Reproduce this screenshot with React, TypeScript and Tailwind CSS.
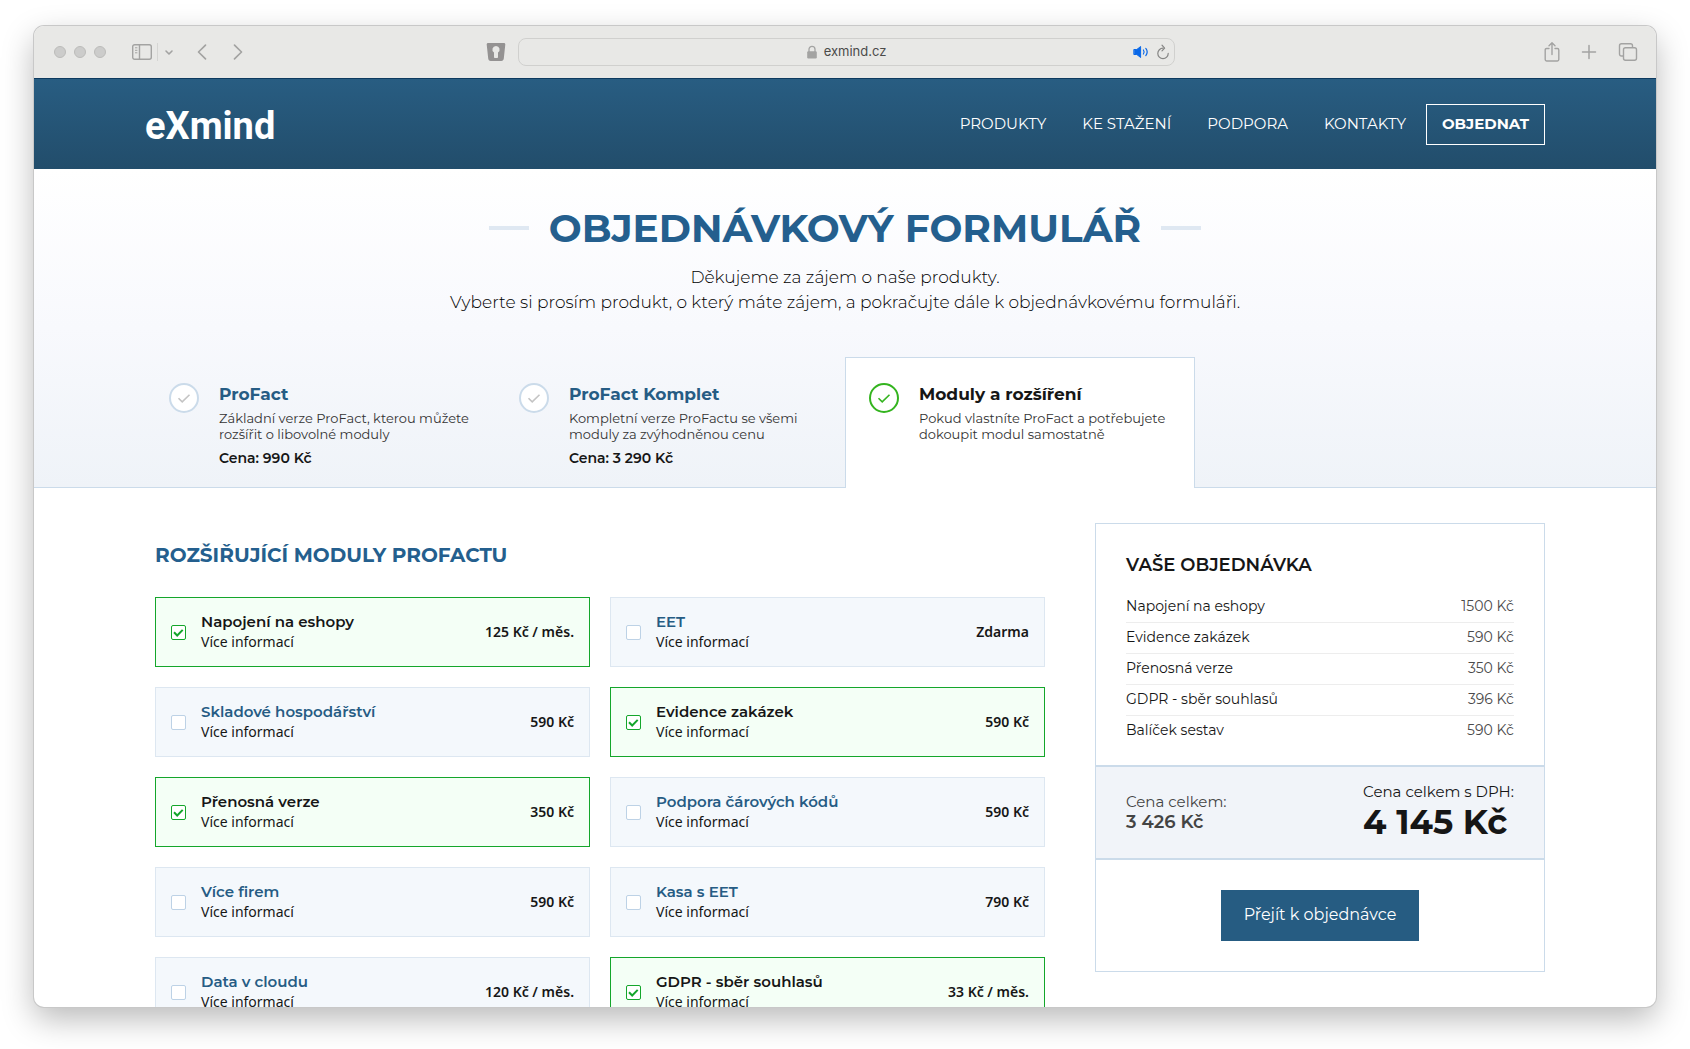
import { useState } from 'react'

const navLinks = ['Produkty', 'Ke stažení', 'Podpora', 'Kontakty']

const products = [
  {
    id: 'profact',
    name: 'ProFact',
    lines: ['Základní verze ProFact, kterou můžete', 'rozšířit o libovolné moduly'],
    price: 'Cena: 990 Kč',
  },
  {
    id: 'komplet',
    name: 'ProFact Komplet',
    lines: ['Kompletní verze ProFactu se všemi', 'moduly za zvýhodněnou cenu'],
    price: 'Cena: 3 290 Kč',
  },
  {
    id: 'moduly',
    name: 'Moduly a rozšíření',
    lines: ['Pokud vlastníte ProFact a potřebujete', 'dokoupit modul samostatně'],
  },
]

const modules = [
  { id: 'eshopy', name: 'Napojení na eshopy', price: '125 Kč / měs.', checked: true },
  { id: 'eet', name: 'EET', price: 'Zdarma' },
  { id: 'sklad', name: 'Skladové hospodářství', price: '590 Kč' },
  { id: 'zakazky', name: 'Evidence zakázek', price: '590 Kč', checked: true },
  { id: 'prenosna', name: 'Přenosná verze', price: '350 Kč', checked: true },
  { id: 'kody', name: 'Podpora čárových kódů', price: '590 Kč' },
  { id: 'firmy', name: 'Více firem', price: '590 Kč' },
  { id: 'kasa', name: 'Kasa s EET', price: '790 Kč' },
  { id: 'cloud', name: 'Data v cloudu', price: '120 Kč / měs.' },
  { id: 'gdpr', name: 'GDPR - sběr souhlasů', price: '33 Kč / měs.', checked: true },
]

const orderItems = [
  ['Napojení na eshopy', '1500 Kč'],
  ['Evidence zakázek', '590 Kč'],
  ['Přenosná verze', '350 Kč'],
  ['GDPR - sběr souhlasů', '396 Kč'],
  ['Balíček sestav', '590 Kč'],
]

function BrowserBar() {
  return (
    <div className="flex h-[53px] shrink-0 items-center border-b border-[#0d3a5f] bg-[#e8e8e6] text-[#a3a3a2]">
      <div className="flex flex-1 items-center pl-5">
        <div className="flex gap-2">
          <span className="size-3 rounded-full border border-[#bcbcba] bg-[#cccccb]" />
          <span className="size-3 rounded-full border border-[#bcbcba] bg-[#cccccb]" />
          <span className="size-3 rounded-full border border-[#bcbcba] bg-[#cccccb]" />
        </div>
        <button aria-label="Postranní panel" className="ml-[25px]">
          <svg width="22" height="18" viewBox="0 0 22 18" fill="none" stroke="currentColor" strokeWidth="1.4">
            <rect x="1.7" y="1.7" width="18.6" height="14.6" rx="2" />
            <path d="M8.5 1.7v14.6" />
            <path d="M4 4.8h2.4M4 7.3h2.4M4 9.8h2.4" strokeWidth="1" />
          </svg>
        </button>
        <span className="ml-1 h-[18px] w-px bg-[#d5d5d3]" />
        <button aria-label="Skupiny panelů" className="ml-1">
          <svg width="14" height="12" viewBox="0 0 14 12" fill="none" stroke="currentColor" strokeWidth="1.6" strokeLinecap="round" strokeLinejoin="round">
            <path d="M4 5l3 3 3-3" />
          </svg>
        </button>
        <button aria-label="Zpět" className="ml-[18px]">
          <svg width="16" height="18" viewBox="0 0 16 18" fill="none" stroke="currentColor" strokeWidth="1.7" strokeLinecap="round" strokeLinejoin="round">
            <path d="M11.5 2.2L4.5 9l7 6.8" />
          </svg>
        </button>
        <button aria-label="Vpřed" className="ml-5">
          <svg width="16" height="18" viewBox="0 0 16 18" fill="none" stroke="currentColor" strokeWidth="1.7" strokeLinecap="round" strokeLinejoin="round">
            <path d="M4.5 2.2l7 6.8-7 6.8" />
          </svg>
        </button>
        <button aria-label="Správce hesel" className="mr-3 ml-auto">
          <svg width="20" height="20" viewBox="0 0 20 20">
            <path d="M2.2 1h15.6c1 0 1.6.7 1.5 1.6l-1.5 14c-.2 1.5-1 2.4-2.5 2.4H4.7c-1.5 0-2.3-.9-2.5-2.4L.7 2.6C.6 1.7 1.2 1 2.2 1z" fill="#949292" />
            <path d="M10 4a3.600 3.600 0 0 0-2 6.600v4.600c0 .5.300.8.800.8h2.400c.5 0 .8-.3.800-.8v-4.600A3.600 3.600 0 0 0 10 4z" fill="#e8e8e6" />
          </svg>
        </button>
      </div>

      <div className="flex h-7 w-[42%] max-w-[657px] items-center rounded-lg border border-[#d0d0ce] px-1">
        <span className="flex-1" />
        <svg width="12" height="14" viewBox="0 0 12 14" className="mr-[6px]">
          <path d="M3 7V4.3a3 3 0 0 1 6 0V7" fill="none" stroke="currentColor" strokeWidth="1.3" />
          <rect x="1.2" y="6.3" width="9.600" height="7.2" rx="1.2" fill="currentColor" />
        </svg>
        <span className="font-[Inter,sans-serif] text-[13px] text-[#4b4b4a]">exmind.cz</span>
        <span className="flex flex-1 items-center justify-end gap-[6px]">
          <button aria-label="Ztlumit panel">
            <svg width="17" height="14" viewBox="0 0 17 14" fill="none" stroke="#0a68e8" strokeLinecap="round">
              <path d="M1.2 4.5h2.6L7.6 1.5v11L3.8 9.5H1.2z" fill="#0a68e8" strokeWidth="1" strokeLinejoin="round" />
              <path d="M10.4 5c.9 1.2.9 2.8 0 4M12.8 3.4c1.7 2.2 1.7 5 0 7.2" strokeWidth="1.2" />
            </svg>
          </button>
          <button aria-label="Načíst znovu">
            <svg width="14" height="16" viewBox="0 0 14 16" fill="none" stroke="#858584" strokeWidth="1.2" strokeLinecap="round" strokeLinejoin="round">
              <path d="M7 4.2a5.2 5.2 0 1 0 5.2 5.2" />
              <path d="M6 1.2l2.6 3L6 6.9" />
            </svg>
          </button>
        </span>
      </div>

      <div className="flex flex-1 items-center justify-end gap-5 pr-[18px]">
        <button aria-label="Sdílet">
          <svg width="16" height="22" viewBox="0 0 16 22" fill="none" stroke="currentColor" strokeWidth="1.4" strokeLinecap="round" strokeLinejoin="round">
            <path d="M5 7.5H2.6C1.7 7.5 1.2 8 1.2 8.9v9.7c0 .9.5 1.4 1.4 1.4h10.8c.9 0 1.4-.5 1.4-1.4V8.9c0-.9-.5-1.4-1.4-1.4H11" />
            <path d="M8 13.5V2M5 4.7L8 1.7l3 3" />
          </svg>
        </button>
        <button aria-label="Nový panel">
          <svg width="18" height="18" viewBox="0 0 18 18" fill="none" stroke="currentColor" strokeWidth="1.5" strokeLinecap="round">
            <path d="M9 2.5v13M2.5 9h13" />
          </svg>
        </button>
        <button aria-label="Přehled panelů">
          <svg width="20" height="20" viewBox="0 0 20 20" fill="none" stroke="currentColor" strokeWidth="1.4" strokeLinejoin="round">
            <rect x="5.5" y="5.7" width="13" height="12.6" rx="2" />
            <path d="M5.5 14H3.5c-1.2 0-2-.8-2-2V3.7c0-1.2.8-2 2-2h9c1.2 0 2 .8 2 2v2" />
          </svg>
        </button>
      </div>
    </div>
  )
}

function Header() {
  return (
    <header className="h-[90px] shrink-0 bg-linear-to-b from-[#285d82] to-[#224d6b]">
      <div className="mx-auto flex h-full max-w-[1400px] items-center justify-between">
        <a href="#" className="pt-1 font-[Roboto,sans-serif] text-[38px] leading-none font-bold text-white">
          eXmind
        </a>
        <nav className="flex items-center gap-9 text-[15px] text-white uppercase">
          {navLinks.map((link) => (
            <a key={link} href="#">
              {link}
            </a>
          ))}
          <a href="#" className="-ml-4 flex h-[41px] items-center border border-white px-[15px] font-bold">
            Objednat
          </a>
        </nav>
      </div>
    </header>
  )
}

function ProductTabs() {
  const [active, setActive] = useState('moduly')

  return (
    <div role="tablist" className="mx-auto -mb-px flex w-full max-w-[1400px]">
      {products.map((product) => {
        const selected = product.id === active
        return (
          <button
            key={product.id}
            role="tab"
            aria-selected={selected}
            onClick={() => setActive(product.id)}
            className={`flex h-[131px] w-[350px] items-start gap-5 border border-b-0 pt-[25px] pl-[23px] text-left ${
              selected ? 'border-[#cbdbea] bg-white' : 'border-transparent'
            }`}
          >
            <svg width="30" height="30" viewBox="0 0 30 30" className="shrink-0">
              <circle cx="15" cy="15" r="14" fill="#fff" stroke={selected ? '#34b41f' : '#cbdbea'} strokeWidth="2" />
              <path d="M9.5 15.3l3.7 3.6 7.3-7.2" fill="none" stroke={selected ? '#34b41f' : '#c4c4c4'} strokeWidth="1.6" />
            </svg>
            <span className="flex flex-col">
              <span className={`text-[17px] leading-[22px] font-bold ${selected ? 'text-[#161616]' : 'text-[#265c84]'}`}>{product.name}</span>
              <span className="mt-[5px] text-[13px] leading-4 whitespace-nowrap text-[#333]">
                {product.lines[0]}
                <br />
                {product.lines[1]}
              </span>
              {product.price && <span className="mt-[6px] text-sm leading-5 font-semibold text-[#161616]">{product.price}</span>}
            </span>
          </button>
        )
      })}
    </div>
  )
}

function ModuleCard({ id, name, price, checked = false }: { id: string; name: string; price: string; checked?: boolean }) {
  return (
    <div className="group flex h-[70px] items-center border border-[#dde7f1] bg-[#f4f8fc] px-[15px] has-checked:border-[#14a62b] has-checked:bg-[#f4fff6]">
      <span className="relative flex size-[15px] shrink-0">
        <input
          id={id}
          type="checkbox"
          defaultChecked={checked}
          className="size-[15px] appearance-none rounded-[2px] border border-[#bdd2e6] bg-white checked:border-[#14a62b]"
        />
        <svg viewBox="0 0 15 15" className="pointer-events-none absolute inset-0 hidden group-has-checked:block">
          <path d="M3 7.300l3.200 3.200 5.500-5.600" fill="none" stroke="#14a62b" strokeWidth="2" />
        </svg>
      </span>
      <div className="ml-[15px] flex flex-col">
        <label htmlFor={id} className="text-[15px] leading-5 font-semibold text-[#265c84] group-has-checked:text-[#161616]">
          {name}
        </label>
        <a href="#" className="font-['Noto_Sans',sans-serif] text-sm leading-5 text-[#161616]">
          Více informací
        </a>
      </div>
      <span className="ml-auto font-['Noto_Sans',sans-serif] text-sm font-semibold text-[#161616]">{price}</span>
    </div>
  )
}

function OrderSummary() {
  return (
    <aside className="w-[450px] shrink-0 self-start border border-[#cbdbea] bg-white">
      <div className="px-[30px] pt-[27px] pb-[19px]">
        <h2 className="text-lg leading-7 font-semibold text-[#161616] uppercase">Vaše objednávka</h2>
        <table className="mt-3 w-full text-sm">
          <tbody>
            {orderItems.map(([name, price]) => (
              <tr key={name} className="h-[31px] border-b border-[#ededed] last:border-b-0">
                <td className="pb-px text-[#161616]">{name}</td>
                <td className="pb-px text-right text-[#4a4a4a]">{price}</td>
              </tr>
            ))}
          </tbody>
        </table>
      </div>
      <div className="flex h-[95px] items-center justify-between border-y-2 border-[#cbdbea] bg-[#f1f4f9] px-[30px] pb-[2px]">
        <p className="text-[15px] leading-5 text-[#444]">
          Cena celkem:
          <strong className="block text-lg leading-5 font-semibold">3 426 Kč</strong>
        </p>
        <p className="text-[15px] leading-5 text-[#161616]">
          Cena celkem s DPH:
          <strong className="block text-[34px] leading-10 font-bold">4 145 Kč</strong>
        </p>
      </div>
      <div className="flex justify-center py-[30px]">
        <button className="h-[51px] w-[198px] bg-[#265c82] pb-[2px] text-base text-white">Přejít k objednávce</button>
      </div>
    </aside>
  )
}

export default function App() {
  return (
    <div className="h-screen bg-white px-[34px] pt-[26px] pb-[42px] font-[Montserrat,Inter,sans-serif]">
      <div className="flex h-full flex-col overflow-hidden rounded-[10px] bg-white shadow-[0_0_0_1px_#c8c8c8,0_12px_32px_rgba(0,0,0,0.28)]">
        <BrowserBar />
        <Header />

        <section className="flex shrink-0 flex-col border-b border-[#cbdbea] bg-linear-to-b from-white via-[#f8f9fd] to-[#eff3f8] pt-8">
          <div className="flex items-center justify-center gap-5">
            <span className="h-1 w-10 bg-[#dfe8f2]" />
            <h1 className="text-[39px] leading-[54px] font-bold text-[#245f8e] uppercase">Objednávkový formulář</h1>
            <span className="h-1 w-10 bg-[#dfe8f2]" />
          </div>
          <p className="mt-[10px] mb-[42px] text-center text-[17px] leading-[25px] font-light text-black">
            Děkujeme za zájem o naše produkty.
            <br />
            Vyberte si prosím produkt, o který máte zájem, a pokračujte dále k objednávkovému formuláři.
          </p>
          <ProductTabs />
        </section>

        <main className="mx-auto flex w-full max-w-[1400px] gap-[50px] pt-[35px] pl-[10px]">
          <section className="flex-1 pt-4">
            <h2 className="text-xl leading-8 font-bold text-[#245f8e] uppercase">Rozšiřující moduly ProFactu</h2>
            <div className="mt-[26px] grid grid-cols-2 gap-5">
              {modules.map((module) => (
                <ModuleCard key={module.id} {...module} />
              ))}
            </div>
          </section>
          <OrderSummary />
        </main>
      </div>
    </div>
  )
}
